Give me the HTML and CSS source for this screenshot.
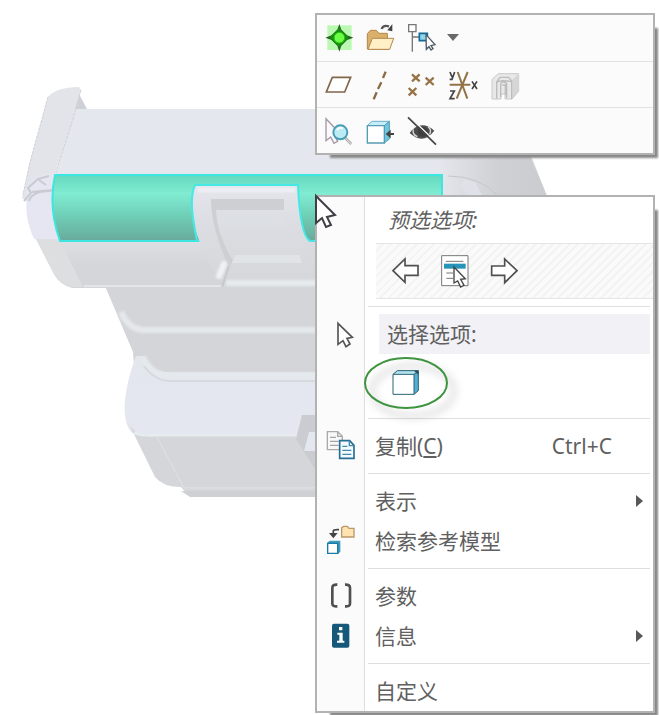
FILE: index.html
```html
<!DOCTYPE html>
<html lang="zh-CN">
<head>
<meta charset="utf-8">
<title>选择选项</title>
<link rel="stylesheet" href="styles.css">
</head>
<body>
<main class="stage">
  <svg class="model" viewBox="0 0 560 500" aria-hidden="true">
    <defs>
      <linearGradient id="band" x1="0" y1="0" x2="0" y2="1">
        <stop offset="0" stop-color="#64d9be"/><stop offset=".28" stop-color="#80ecd2"/>
        <stop offset=".6" stop-color="#6fd0b8"/><stop offset="1" stop-color="#69aa9b"/>
      </linearGradient>
      <linearGradient id="under" x1="0" y1="0" x2="0" y2="1">
        <stop offset="0" stop-color="#dfe0e4"/><stop offset=".5" stop-color="#d5d6da"/><stop offset="1" stop-color="#d4d5d9"/>
      </linearGradient>
      <linearGradient id="side" x1="440" y1="0" x2="547" y2="0" gradientUnits="userSpaceOnUse">
        <stop offset="0" stop-color="#e4e6ec"/><stop offset=".55" stop-color="#cfd0d4"/><stop offset="1" stop-color="#cbccd0"/>
      </linearGradient>
      <linearGradient id="latch" x1="0" y1="0" x2="0" y2="1">
        <stop offset="0" stop-color="#e4e6ec"/><stop offset=".35" stop-color="#dcdee3"/><stop offset="1" stop-color="#d4d6da"/>
      </linearGradient>
      <linearGradient id="base" x1="0" y1="0" x2="0" y2="1">
        <stop offset="0" stop-color="#e3e7eb"/><stop offset=".4" stop-color="#e4e6f0"/><stop offset="1" stop-color="#e4e6f0"/>
      </linearGradient>
      <filter id="soft" filterUnits="userSpaceOnUse" x="0" y="0" width="560" height="500"><feGaussianBlur stdDeviation="1"/></filter>
    </defs>
    <path d="M105 286H320V420H138L133 352Z" fill="#d4d5d9"/>
    <path d="M121 312Q128 328 142 330H330" fill="none" stroke="#e4e8eb" stroke-width="6" filter="url(#soft)"/>
    <path d="M136 356Q127 380 125 400Q123 424 132 433L155 437H320V356Z" fill="url(#base)"/>
    <path d="M144 356H320V372H164Q149 369 144 356Z" fill="#d4d5d9"/>
    <path d="M143 357Q151 375 168 376H330" fill="none" stroke="#e4e9ed" stroke-width="6" filter="url(#soft)"/>
    <path d="M144 366Q155 381 170 381H320" fill="none" stroke="#d6dade" stroke-width="2"/>
    <path d="M128 422Q133 434 148 436H320V497H190L181 487Q163 487 155 477Z" fill="#d4d6da"/>
    <path d="M134 433Q145 436 155 435H297" fill="none" stroke="#e6ebee" stroke-width="3"/>
    <path d="M157 437L184 488H320" fill="none" stroke="#e0e2e5" stroke-width="1"/>
    <path d="M181 491H320V497H190Z" fill="#cfd0d3"/>
    <path d="M302 415H320V477L296 439Z" fill="#caccd1"/>
    <path d="M309 432H320V451H304Z" fill="#e4e6f0"/>
    <path d="M72 109H513L547 196H50Z" fill="#e5e7ef"/>
    <path d="M442 155H530L547 196H438Z" fill="url(#side)"/>
    <path d="M448 176Q480 176 498 196" fill="none" stroke="#c5c7cd"/>
    <path d="M464 179L475 182L482 195H468L461 186Z" fill="#dfe1e8"/>
    <path d="M79 94L87 109H72Z" fill="#ced1d7"/>
    <path d="M48 97Q56 87 79 87L81 90L54 176Q36 178 27 202L22 198L30 162L38 133Z" fill="#e2e4e9"/>
    <path d="M81 90L73 119L55 175M48 97L30 162L23 195" fill="none" stroke="#ced1d5" stroke-width="1" stroke-dasharray="3 1"/>
    <path d="M25 191Q34 171 57 174L62 240L34 239Q24 216 27 200Z" fill="#e5e6f1"/>
    <path d="M24 201L31 193L28 188L38 179L49 176M29 201Q32 191 51 191M32 192L52 190M39 180L46 185" fill="none" stroke="#c8cbd2" stroke-width="2"/>
    <path d="M36 239H320V288H72Q59 284 54 274Z" fill="url(#under)"/>
    <path d="M36 239L60 240L83 287H72Q59 284 54 274Z" fill="#dcdedf"/>
    <path d="M84 286H223" fill="none" stroke="#e2e5e9" stroke-width="2"/>
    <path d="M55 175H442V241H60Q48 208 55 175Z" fill="url(#band)" stroke="#3ee6e1" stroke-width="2"/>
    <path d="M195 185H298Q300 235 310 241H320V286H223Q201 252 193 222Q190 199 195 185Z" fill="url(#latch)"/>
    <path d="M195 185H298Q300 235 310 241H320M195 185Q190 196 193 218Q195 231 197 241" fill="none" stroke="#46e8e5" stroke-width="2"/>
    <path d="M198 190H295" stroke="#eef0f5" stroke-width="4" filter="url(#soft)"/>
    <path d="M211 199H284V210H216Q217 235 233 261L229 267Q211 228 211 199Z" fill="#cdcfd3"/>
    <path d="M217 211H284V225H219Z" fill="#dce0e5" filter="url(#soft)"/>
    <path d="M235 255H299L302 263H232Z" fill="#e1e4e7"/>
    <path d="M226 283H330" stroke="#e6ebed" stroke-width="6" filter="url(#soft)"/>
    <path d="M219 276L224 264" stroke="#eff1f3" stroke-width="6" stroke-linecap="round" filter="url(#soft)"/>
    <path d="M222 287L229 266" stroke="#c6c8cc" stroke-width="2"/>
  </svg>

  <div class="popups">
    <div class="panel toolbar" role="toolbar" aria-label="工具栏">
      <div class="tool-row">
        <button class="tool" aria-label="激活"><svg viewBox="42 54 84 84">
          <path d="M52 58H125V132H52Z" fill="#bbf9b3"/>
          <path d="M88 54L94 71L111 88L130 95L111 102L94 119L88 137L82 119L65 102L46 95L65 88L82 71Z" fill="#285f26"/>
          <path d="M88 65L117 95L88 124L58 95Z" fill="#178f0e"/><circle cx="88" cy="95" r="16" fill="#6dff44" stroke="#24bd12" stroke-width="3"/></svg></button>
        <button class="tool" aria-label="打开"><svg viewBox="168 54 84 84">
          <path d="M172 129V83L181 73H199L207 82H232V96L237 130Z" fill="#d9b16d" stroke="#b3864b" stroke-width="3"/>
          <path d="M187 97H251L239 130H174Z" fill="#fff0c5" stroke="#b3864b" stroke-width="3"/>
          <path d="M215 69Q219 56 237 61" fill="none" stroke="#555" stroke-width="7"/><path d="M232 73L247 76V54Z" fill="#444"/></svg></button>
        <span class="split">
          <button class="tool" aria-label="模型树选择"><svg viewBox="294 54 84 84">
            <path d="M296 56H318V77H296ZM307 77V137M307 93H327" fill="#fff" stroke="#777" stroke-width="4"/>
            <path d="M328 82H352V104H328Z" fill="#8ed5ee" stroke="#176993" stroke-width="5"/>
            <path d="M348 86L375 116L363 119L369 128L363 132L357 122L349 130Z" fill="#fff" stroke="#505968" stroke-width="4"/></svg></button>
          <button class="drop" aria-label="更多"><svg viewBox="0 0 14 8"><path d="M1 0H13L7 7Z" fill="#696969"/></svg></button>
        </span>
      </div>
      <div class="tool-row">
        <button class="tool" aria-label="平面"><svg viewBox="42 192 84 84"><path d="M67 211H122L104 255H49Z" fill="#fff" stroke="#82664c" stroke-width="5"/></svg></button>
        <button class="tool" aria-label="轴"><svg viewBox="168 192 84 84"><path d="M227 194L219 213M214 226L204 246M200 256L191 277" stroke="#8b6b45" stroke-width="7"/></svg></button>
        <button class="tool" aria-label="点"><svg viewBox="294 192 84 84"><path d="M306 202L329 223M329 202L306 223M347 212L371 234M371 212L347 234M296 243L319 265M319 243L296 265" stroke="#977347" stroke-width="7"/></svg></button>
        <button class="tool" aria-label="坐标系"><svg viewBox="420 192 84 84"><path d="M419 233H481M443 195L472 275M473 195L440 275" stroke="#927347" stroke-width="6"/><path d="M420 195L426 210M434 195L426 217H419M420 252H433L420 275H434M486 223L501 246M501 223L486 246" fill="none" stroke="#444" stroke-width="5"/></svg></button>
        <button class="tool" aria-label="收缩包络" disabled><svg viewBox="36 192 84 84">
          <path d="M36 217L55 200H116V253L96 276H75V261H63V276H36Z" fill="#e8e8e8" stroke="#c9c9c9" stroke-width="3"/>
          <path d="M97 218V276L116 253V200Z" fill="#d6d6d6"/>
          <path d="M50 275V225L60 211H86L95 222V276M62 270V234Q63 223 73 225Q81 226 80 237V273M50 225L67 221L95 223M67 234H76V263" fill="none" stroke="#bcbcbc" stroke-width="4"/></svg></button>
      </div>
      <div class="tool-row">
        <button class="tool" aria-label="查找"><svg viewBox="42 333 84 84">
          <path d="M48 338L88 380L73 387L83 406L72 412L62 393L48 404Z" fill="#faf9fb" stroke="#a497a3" stroke-width="4"/>
          <path d="M106 396L124 414" stroke="#aaa" stroke-width="8"/><path d="M106 396L124 414" stroke="#eee" stroke-width="3"/>
          <circle cx="91" cy="379" r="21" fill="#bcebf5" stroke="#4a9db4" stroke-width="6"/><path d="M81 372Q88 362 99 367" fill="none" stroke="#fff" stroke-width="6"/></svg></button>
        <button class="tool" aria-label="缩放到选定项"><svg viewBox="168 333 84 84">
          <path d="M172 359L186 346H238L223 359Z" fill="#c4effb" stroke="#70afc4" stroke-width="3"/><path d="M223 359L238 346V399L223 411Z" fill="#6bc9e1" stroke="#559bb3" stroke-width="3"/>
          <path d="M172 359H223V411H172Z" fill="#fff" stroke="#559bb3" stroke-width="4"/><path d="M252 384H237" stroke="#444" stroke-width="6"/><path d="M227 384L242 371V397Z" fill="#444"/></svg></button>
        <button class="tool" aria-label="隐藏"><svg viewBox="294 333 84 84">
          <path d="M299 381Q331 339 373 374Q339 418 299 381Z" fill="#4d4d4d"/><path d="M310 370Q306 385 322 392M354 363Q366 370 359 385" fill="none" stroke="#dedede" stroke-width="4"/>
          <circle cx="338" cy="377" r="15" fill="#3f3f3f"/><path d="M297 331L382 412" stroke="#fafafa" stroke-width="4"/><path d="M294 334L378 416" stroke="#444" stroke-width="5"/></svg></button>
      </div>
    </div>

    <div class="panel menu">
      <div class="title">预选选项:</div>
      <div class="strip">
        <button class="pick" aria-label="上一个"><svg viewBox="243 213 90 90"><path d="M249 257L285 222V242H324V271H285V292Z" fill="#fff" stroke="#505050" stroke-width="5"/></svg></button>
        <button class="pick" aria-label="从列表中拾取"><svg viewBox="390 213 90 90"><path d="M395 212H474V302H395Z" fill="#fff" stroke="#777" stroke-width="3"/><path d="M407 229H460M409 264H429M409 280H429" stroke="#777" stroke-width="3"/><path d="M402 236H467V251H402Z" fill="#2693b9"/><path d="M432 246L466 281L452 283L462 301L452 306L443 288L432 294Z" fill="#fff" stroke="#444" stroke-width="4"/></svg></button>
        <button class="pick" aria-label="下一个"><svg viewBox="27 213 90 90"><path d="M111 257L74 222V243H35V271H74V293Z" fill="#fff" stroke="#505050" stroke-width="5"/></svg></button>
      </div>
      <hr>
      <div class="item choice">
        <span class="mark"><svg viewBox="45 54 90 90"><path d="M84 67L127 109L111 112L120 129L108 137L99 119L84 130Z" fill="#fff" stroke="#555" stroke-width="5"/></svg></span>
        <span class="caption">选择选项:</span>
      </div>
      <div class="filters">
        <button class="pick" aria-label="零件"><svg viewBox="243 201 90 90"><path d="M249 220L262 209H325L312 220Z" fill="#b9ebf7"/><path d="M312 220L325 209V269L312 280Z" fill="#55afd0"/><path d="M249 220H312V280H249Z" fill="#fff"/><path d="M249 220L262 209H325V269L312 280H249ZM312 220L325 209M249 220H312V280" fill="none" stroke="#2a6377" stroke-width="3"/><path d="M312 209H325V221Z" fill="#264d60"/></svg></button>
        <svg class="ring" viewBox="0 0 84 54" aria-hidden="true"><ellipse class="ring-line" cx="42" cy="27" rx="41" ry="25"/></svg>
      </div>
      <hr>
      <button class="item">
        <span class="mark"><svg viewBox="45 45 90 90"><path d="M52 47H83L97 61V101H52Z" fill="#f8f8f8" stroke="#aaa" stroke-width="4"/><path d="M83 47V61H97M60 64H78M60 76H86M60 88H86" fill="none" stroke="#a5a5a5" stroke-width="4"/><path d="M89 74H119L132 88V127H89Z" fill="#f3fbff" stroke="#286d92" stroke-width="5"/><path d="M118 74V89H132M97 91H112M97 103H124M97 115H124" fill="none" stroke="#438aaa" stroke-width="4"/></svg></span>
        <span>复制(<u>C</u>)</span><kbd>Ctrl+C</kbd>
      </button>
      <hr>
      <button class="item"><span class="mark"></span><span>表示</span><svg class="arrow" viewBox="0 0 7 12"><path d="M0 0L7 6L0 12Z"/></svg></button>
      <button class="item">
        <span class="mark"><svg viewBox="45 330 90 90"><path d="M70 356V344Q72 340 87 341" fill="none" stroke="#444" stroke-width="5"/><path d="M57 351H83L70 367Z" fill="#444"/><path d="M95 363V335L101 331H112L117 337H132V363Z" fill="#ffe4b0" stroke="#ba986a" stroke-width="4"/><path d="M52 380L59 374H91V407L84 414H52Z" fill="#3c9abb"/><path d="M53 382H83V412H53Z" fill="#fff" stroke="#197ca5" stroke-width="4"/></svg></span>
        <span>检索参考模型</span>
      </button>
      <hr>
      <button class="item">
        <span class="mark"><svg viewBox="45 45 90 90"><path d="M82 56Q67 55 67 65V113Q67 122 82 121M105 56Q120 55 120 65V113Q120 122 105 121" fill="none" stroke="#505050" stroke-width="8"/></svg></span>
        <span>参数</span>
      </button>
      <button class="item">
        <span class="mark"><svg viewBox="45 165 90 90"><rect x="66" y="173" width="52" height="72" rx="6" fill="#16587a"/><path d="M87 183H97V193H87ZM82 200H98V224H103V230H81V224H88V206H82Z" fill="#fff"/></svg></span>
        <span>信息</span><svg class="arrow" viewBox="0 0 7 12"><path d="M0 0L7 6L0 12Z"/></svg>
      </button>
      <hr>
      <button class="item"><span class="mark"></span><span>自定义</span></button>
      <svg class="pointer" viewBox="0 0 22 34" aria-hidden="true"><path d="M1 1L20 20L12 22L16 30L11 32L7 23L1 28Z"/></svg>
    </div>
  </div>
</main>
</body>
</html>
```
FILE: styles.css
```css
* { box-sizing: border-box; }

body {
  margin: 0;
  background: #fff;
  color: #606060;
  font: 21px/30px "Noto Sans", "Noto Sans CJK SC", sans-serif;
}

.stage { position: relative; overflow: hidden; }

/* The part sits on the canvas, under the floating panels. */
.model {
  position: absolute;
  top: 0;
  left: 0;
  width: 560px;
  height: 500px;
}

.popups {
  position: relative;
  display: flex;
  flex-direction: column;
  gap: 40px;
  margin-left: 315px;
  padding: 13px 4px 3px 0;
}

.panel {
  border: 2px solid #b2b2b2;
  background: #fbfbfb;
  box-shadow: 9px 9px 2px -6px #888;
}

button {
  border: 0;
  padding: 0;
  background: none;
  color: inherit;
  font: inherit;
  text-align: left;
}

svg { display: block; overflow: visible; }

.tool-row {
  display: flex;
  align-items: center;
  gap: 14px;
  height: 46px;
  padding-left: 7px;
}
.tool-row + .tool-row { border-top: 1px solid #e2e2e2; }
.tool, .tool svg { width: 28px; height: 28px; }
.split { display: flex; align-items: center; gap: 10px; }
.drop svg { width: 14px; height: 8px; }

.menu {
  position: relative;
  background: linear-gradient(to right, #fbfbfb 47px, #dedede 47px, #dedede 48px, #fff 48px);
}

.title {
  padding: 8px 0 8px 71px;
  font-style: italic;
}

.strip {
  display: flex;
  align-items: center;
  gap: 19px;
  height: 56px;
  margin-left: 59px;
  padding-left: 15px;
  border: solid #e6e6e6;
  border-width: 1px 0;
  background: repeating-linear-gradient(135deg, #fafafa 0 4px, #f3f3f3 4px 6px);
}
.pick, .pick svg, .mark svg { width: 30px; height: 30px; }

hr {
  height: 1px;
  margin: 7px 3px 7px 51px;
  border: 0;
  background: #dfdfdf;
}

.item {
  display: flex;
  align-items: center;
  width: 100%;
  height: 40px;
  padding-right: 10px;
}
.mark { width: 50px; margin-right: 8px; padding-left: 8px; }
.choice { padding-right: 3px; }
.choice .mark { margin-right: 12px; }
.caption { flex: 1; padding: 5px 8px; background: #f1f1f6; }
kbd { margin-left: auto; padding-right: 31px; font: inherit; }
.arrow { width: 7px; height: 12px; margin-left: auto; fill: #585858; }

.filters {
  position: relative;
  display: flex;
  align-items: center;
  height: 57px;
  padding-left: 74px;
}
.ring {
  position: absolute;
  left: 47px;
  top: 2px;
  width: 84px;
  height: 54px;
  filter: drop-shadow(7px 8px 4px #0005);
  pointer-events: none;
}
.ring-line { fill: none; stroke: #3f9440; stroke-width: 2; }

.pointer {
  position: absolute;
  left: -2px;
  top: -2px;
  width: 22px;
  height: 34px;
  fill: #fff;
  stroke: #3f3f46;
  stroke-width: 2;
}
```
